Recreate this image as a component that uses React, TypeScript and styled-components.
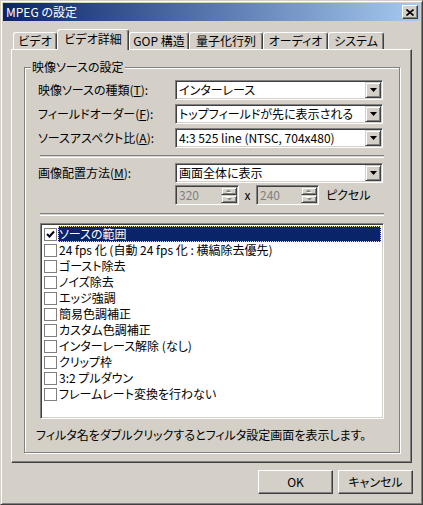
import React from "react";
import styled, { createGlobalStyle } from "styled-components";

const GlobalStyle = createGlobalStyle`
  html, body {
    margin: 0;
    padding: 0;
    background: #d4d0c8;
  }
  body {
    font-family: "Noto Sans CJK JP", "Noto Sans", sans-serif;
    font-size: 12px;
    font-feature-settings: "palt";
    color: #000;
  }
`;

const Window = styled.div`
  box-sizing: border-box;
  width: 423px;
  height: 505px;
  background: #d4d0c8;
  border: 1px solid;
  border-color: #d4d0c8 #404040 #404040 #d4d0c8;
  box-shadow: inset 1px 1px 0 #fff, inset -1px -1px 0 #808080;
  padding: 2px;
  display: flex;
  flex-direction: column;
`;

const TitleBar = styled.div`
  height: 18px;
  background: linear-gradient(to right, #0a246a, #a6caf0);
  display: flex;
  align-items: center;
  justify-content: space-between;
  padding: 0 2px 0 3px;
`;

const Title = styled.span`
  color: #fff;
  font-size: 12px;
  line-height: 16px;
`;

const CloseButton = styled.div`
  box-sizing: border-box;
  width: 16px;
  height: 14px;
  background: #d4d0c8;
  border: 1px solid;
  border-color: #fff #404040 #404040 #fff;
  box-shadow: inset -1px -1px 0 #808080;
  display: flex;
  align-items: center;
  justify-content: center;
`;

const TabStrip = styled.div`
  display: flex;
  align-items: flex-end;
  height: 20px;
  margin: 8px 8px 0;
  padding-left: 2px;
`;

const Tab = styled.div<{ $w: number; $active?: boolean }>`
  box-sizing: border-box;
  position: relative;
  z-index: ${(p) => (p.$active ? 1 : 0)};
  width: ${(p) => p.$w}px;
  height: ${(p) => (p.$active ? 21 : 17)}px;
  margin-bottom: ${(p) => (p.$active ? -1 : 0)}px;
  background: #d4d0c8;
  border-top: 1px solid #fff;
  border-left: 1px solid #fff;
  border-right: 1px solid #404040;
  box-shadow: inset -1px 0 0 #808080;
  border-radius: 3px 3px 0 0;
  display: flex;
  align-items: ${(p) => (p.$active ? "flex-start" : "center")};
  padding-top: ${(p) => (p.$active ? 1 : 0)}px;
  justify-content: center;
  line-height: 16px;
  white-space: nowrap;
`;

const Panel = styled.div`
  box-sizing: border-box;
  height: 414px;
  margin: 0 8px;
  border: 1px solid;
  border-color: #fff #404040 #404040 #fff;
  box-shadow: inset -1px -1px 0 #808080;
  display: flex;
  flex-direction: column;
  padding: 17px 11px 9px 12px;
`;

const Group = styled.div`
  position: relative;
  flex: 1;
  display: flex;
  flex-direction: column;
  border: 1px solid #808080;
  box-shadow: 1px 1px 0 #fff, inset 1px 1px 0 #fff;
  padding: 12px 15px 9px 13px;
`;

const GroupLabel = styled.span`
  position: absolute;
  top: -9px;
  left: 6px;
  padding: 0 1px;
  background: #d4d0c8;
  line-height: 16px;
`;

const FieldRow = styled.div<{ $top?: number }>`
  display: grid;
  grid-template-columns: 137px 208px;
  align-items: center;
  height: 20px;
  margin-top: ${(p) => p.$top ?? 0}px;
`;

const Label = styled.span`
  line-height: 16px;
  white-space: nowrap;
`;

const Combo = styled.div`
  box-sizing: border-box;
  height: 20px;
  background: #fff;
  border: 1px solid;
  border-color: #808080 #fff #fff #808080;
  box-shadow: inset 1px 1px 0 #404040, inset -1px -1px 0 #d4d0c8;
  display: flex;
  align-items: center;
  padding: 1px 1px 1px 3px;
`;

const ComboText = styled.span`
  flex: 1;
  line-height: 16px;
  white-space: nowrap;
`;

const ArrowButton = styled.div`
  box-sizing: border-box;
  width: 16px;
  height: 16px;
  background: #d4d0c8;
  border: 1px solid;
  border-color: #d4d0c8 #404040 #404040 #d4d0c8;
  box-shadow: inset 1px 1px 0 #fff, inset -1px -1px 0 #808080;
  display: flex;
  align-items: center;
  justify-content: center;
`;

const Separator = styled.div<{ $top: number }>`
  height: 1px;
  margin: ${(p) => p.$top}px 0 0 2px;
  border-top: 1px solid #808080;
  border-bottom: 1px solid #fff;
`;

const SpinRow = styled.div`
  display: flex;
  align-items: center;
  height: 20px;
  margin: 2px 0 0 137px;
`;

const SpinBox = styled.div<{ $w: number }>`
  box-sizing: border-box;
  width: ${(p) => p.$w}px;
  height: 20px;
  background: #d4d0c8;
  border: 1px solid;
  border-color: #808080 #fff #fff #808080;
  box-shadow: inset 1px 1px 0 #404040, inset -1px -1px 0 #d4d0c8;
  display: flex;
  align-items: stretch;
  padding: 1px 1px 1px 3px;
`;

const SpinText = styled.span`
  flex: 1;
  color: #808080;
  line-height: 16px;
`;

const SpinButtons = styled.div`
  width: 16px;
  display: flex;
  flex-direction: column;
`;

const SpinHalf = styled.div`
  box-sizing: border-box;
  flex: 1;
  background: #d4d0c8;
  border: 1px solid;
  border-color: #d4d0c8 #404040 #404040 #d4d0c8;
  box-shadow: inset 1px 1px 0 #fff, inset -1px -1px 0 #808080;
  display: flex;
  align-items: center;
  justify-content: center;
`;

const Times = styled.span`
  width: 17px;
  text-align: center;
  line-height: 16px;
`;

const Unit = styled.span`
  margin-left: 7px;
  line-height: 16px;
`;

const List = styled.div`
  flex: 1;
  margin: 7px 0 0 2px;
  background: #fff;
  border: 1px solid;
  border-color: #808080 #fff #fff #808080;
  box-shadow: inset 1px 1px 0 #404040, inset -1px -1px 0 #d4d0c8;
  padding: 2px 2px;
`;

const Item = styled.div`
  display: flex;
  align-items: center;
  height: 16px;
`;

const Check = styled.div`
  box-sizing: border-box;
  width: 13px;
  height: 13px;
  margin: 0 1px 0 1px;
  border: 1px solid #808080;
  background: #fff;
  display: flex;
  align-items: center;
  justify-content: center;
`;

const ItemText = styled.span<{ $selected?: boolean }>`
  box-sizing: border-box;
  flex: 1;
  height: 16px;
  padding-left: 1px;
  line-height: 16px;
  white-space: nowrap;
  background: ${(p) => (p.$selected ? "#0a246a" : "transparent")};
  color: ${(p) => (p.$selected ? "#fff" : "#000")};
  outline: ${(p) => (p.$selected ? "1px dotted #e8e0a0" : "none")};
  outline-offset: -1px;
`;

const Hint = styled.div`
  margin-top: 8px;
  margin-left: -2px;
  line-height: 16px;
  white-space: nowrap;
`;

const ButtonRow = styled.div`
  display: flex;
  justify-content: flex-end;
  gap: 5px;
  margin: 7px 7px 0 0;
`;

const Button = styled.div`
  box-sizing: border-box;
  width: 75px;
  height: 24px;
  background: #d4d0c8;
  border: 1px solid;
  border-color: #fff #404040 #404040 #fff;
  box-shadow: inset -1px -1px 0 #808080;
  display: flex;
  align-items: center;
  justify-content: center;
  line-height: 16px;
`;

const DownArrow = () => (
  <svg width="7" height="4" viewBox="0 0 7 4">
    <path d="M0 0h7L3.5 4z" fill="#000" />
  </svg>
);

const SmallArrow = ({ up }: { up?: boolean }) => (
  <svg width="6" height="4" viewBox="0 0 6 4">
    <path d="M1 4h5L3.5 1.5z" fill="#fff" transform={up ? "" : "rotate(180 3 2)"} />
    <path d="M0 3h5L2.5 0.5z" fill="#808080" transform={up ? "" : "rotate(180 3 2)"} />
  </svg>
);

const CheckMark = () => (
  <svg width="9" height="9" viewBox="0 0 9 9">
    <path d="M1 4l2.5 2.5L8 1.5" stroke="#000" strokeWidth="2" fill="none" />
  </svg>
);

const tabs = [
  { label: "ビデオ", w: 44 },
  { label: "ビデオ詳細", w: 72, active: true },
  { label: "GOP 構造", w: 60 },
  { label: "量子化行列", w: 74 },
  { label: "オーディオ", w: 65 },
  { label: "システム", w: 56 },
];

const filters = [
  "ソースの範囲",
  "24 fps 化 (自動 24 fps 化 : 横縞除去優先)",
  "ゴースト除去",
  "ノイズ除去",
  "エッジ強調",
  "簡易色調補正",
  "カスタム色調補正",
  "インターレース解除 (なし)",
  "クリップ枠",
  "3:2 プルダウン",
  "フレームレート変換を行わない",
];

function Select({ value }: { value: string }) {
  return (
    <Combo>
      <ComboText>{value}</ComboText>
      <ArrowButton>
        <DownArrow />
      </ArrowButton>
    </Combo>
  );
}

function Spinner({ value, w }: { value: string; w: number }) {
  return (
    <SpinBox $w={w}>
      <SpinText>{value}</SpinText>
      <SpinButtons>
        <SpinHalf>
          <SmallArrow up />
        </SpinHalf>
        <SpinHalf>
          <SmallArrow />
        </SpinHalf>
      </SpinButtons>
    </SpinBox>
  );
}

export default function App() {
  return (
    <>
      <GlobalStyle />
      <Window>
        <TitleBar>
          <Title>MPEG の設定</Title>
          <CloseButton>
            <svg width="8" height="7" viewBox="0 0 8 7">
              <path d="M0.5 0.5l7 6M7.5 0.5l-7 6" stroke="#000" strokeWidth="1.6" />
            </svg>
          </CloseButton>
        </TitleBar>

        <TabStrip>
          {tabs.map((t) => (
            <Tab key={t.label} $w={t.w} $active={t.active}>
              {t.label}
            </Tab>
          ))}
        </TabStrip>

        <Panel>
          <Group>
            <GroupLabel>映像ソースの設定</GroupLabel>
            <FieldRow>
              <Label>
                映像ソースの種類(<u>T</u>):
              </Label>
              <Select value="インターレース" />
            </FieldRow>
            <FieldRow $top={4}>
              <Label>
                フィールドオーダー(<u>F</u>):
              </Label>
              <Select value="トップフィールドが先に表示される" />
            </FieldRow>
            <FieldRow $top={4}>
              <Label>
                ソースアスペクト比(<u>A</u>):
              </Label>
              <Select value="4:3 525 line (NTSC, 704x480)" />
            </FieldRow>

            <Separator $top={7} />

            <FieldRow $top={5}>
              <Label>
                画像配置方法(<u>M</u>):
              </Label>
              <Select value="画面全体に表示" />
            </FieldRow>
            <SpinRow>
              <Spinner value="320" w={64} />
              <Times>x</Times>
              <Spinner value="240" w={63} />
              <Unit>ピクセル</Unit>
            </SpinRow>

            <Separator $top={8} />

            <List>
              {filters.map((f, i) => (
                <Item key={f}>
                  <Check>{i === 0 && <CheckMark />}</Check>
                  <ItemText $selected={i === 0}>{f}</ItemText>
                </Item>
              ))}
            </List>

            <Hint>フィルタ名をダブルクリックするとフィルタ設定画面を表示します。</Hint>
          </Group>
        </Panel>

        <ButtonRow>
          <Button>OK</Button>
          <Button>キャンセル</Button>
        </ButtonRow>
      </Window>
    </>
  );
}
